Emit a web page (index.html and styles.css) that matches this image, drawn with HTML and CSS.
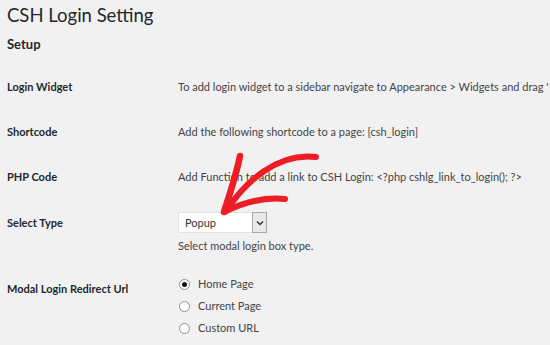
FILE: index.html
```
<!DOCTYPE html>
<html>
<head>
<meta charset="utf-8">
<link rel="stylesheet" href="styles.css">
</head>
<body>
<div class="wrap">
  <h1 class="title">CSH Login Setting</h1>
  <h2 class="section">Setup</h2>
  <div class="form">
    <div class="row r1">
      <div class="label">Login Widget</div>
      <div class="field">To add login widget to a sidebar navigate to Appearance &gt; Widgets and drag '</div>
    </div>
    <div class="row r1">
      <div class="label">Shortcode</div>
      <div class="field">Add the following shortcode to a page: [csh_login]</div>
    </div>
    <div class="row r1">
      <div class="label">PHP Code</div>
      <div class="field">Add Function to add a link to CSH Login: &lt;?php cshlg_link_to_login(); ?&gt;</div>
    </div>
    <div class="row r4">
      <div class="label">Select Type</div>
      <div class="field">
        <div class="select">
          <span class="sel-text">Popup</span>
          <span class="sel-btn"><svg width="8" height="6" viewBox="0 0 8 6"><path d="M1 1.5 L4 4.5 L7 1.5" fill="none" stroke="#333" stroke-width="1.5"/></svg></span>
        </div>
        <div class="hint">Select modal login box type.</div>
      </div>
    </div>
    <div class="row r5">
      <div class="label">Modal Login Redirect Url</div>
      <div class="field radios">
        <label class="radio"><span class="dot checked"></span>Home Page</label>
        <label class="radio"><span class="dot"></span>Current Page</label>
        <label class="radio"><span class="dot"></span>Custom URL</label>
      </div>
    </div>
  </div>
</div>
<svg class="arrow" width="550" height="345" viewBox="0 0 550 345">
  <g fill="none" stroke="#ee1c24" stroke-linecap="round" stroke-linejoin="round">
    <path d="M226 211 C 245 182, 278 152, 316 157" stroke-width="6"/>
    <path d="M240 156 C 236 176, 229 196, 224 212" stroke-width="6.5"/>
    <path d="M224 212 C 244 202, 264 197, 285 199" stroke-width="6"/>
  </g>
</svg>
</body>
</html>
```
FILE: styles.css
```
html, body {
  margin: 0;
  padding: 0;
  background: #f1f1f1;
  width: 550px;
  height: 345px;
  overflow: hidden;
  font-family: "Lato", "Open Sans", sans-serif;
  color: #23282d;
}
.wrap {
  padding-left: 7px;
  white-space: nowrap;
}
.title {
  margin: 0;
  padding-top: 2px;
  font-size: 18.5px;
  line-height: 26px;
  font-weight: 400;
  color: #23282d;
}
.section {
  margin: 0;
  padding-top: 8px;
  font-size: 13px;
  line-height: 17px;
  font-weight: 700;
  color: #23282d;
}
.form {
  margin-top: 12px;
}
.row {
  display: grid;
  grid-template-columns: 171px 1fr;
  font-size: 11px;
  line-height: 16px;
}
.r1 {
  height: 45px;
  padding-top: 14px;
  box-sizing: border-box;
}
.r4 {
  height: 60px;
  padding-top: 12px;
  box-sizing: border-box;
}
.r4 .label {
  padding-top: 3px;
}
.r5 .label {
  padding-top: 21px;
}
.label {
  font-weight: 700;
  color: #23282d;
}
.field {
  color: #444;
  overflow: hidden;
}
.select {
  display: flex;
  width: 89px;
  height: 21px;
  background: #fff;
  box-sizing: border-box;
  border: 1px solid #e2e2e2;
}
.sel-text {
  flex: 1;
  padding-left: 6px;
  line-height: 19px;
  color: #333;
}
.sel-btn {
  width: 13px;
  border: 1px solid #a9a9a9;
  background: #e9e9e9;
  margin: -1px -1px -1px 0;
  display: flex;
  align-items: center;
  justify-content: center;
}
.hint {
  margin-top: 5px;
}
.radios {
  padding-top: 16px;
  display: flex;
  flex-direction: column;
  gap: 6px;
}
.radio {
  display: flex;
  align-items: center;
  gap: 8px;
  color: #444;
}
.dot {
  width: 11px;
  height: 11px;
  border: 1px solid #8c8f94;
  border-radius: 50%;
  box-sizing: border-box;
  background: #fff;
  margin-left: 1px;
  position: relative;
}
.dot.checked::after {
  content: "";
  position: absolute;
  left: 2px;
  top: 2px;
  width: 5px;
  height: 5px;
  border-radius: 50%;
  background: #111;
}
.arrow {
  position: absolute;
  left: 0;
  top: 0;
  pointer-events: none;
}
```
